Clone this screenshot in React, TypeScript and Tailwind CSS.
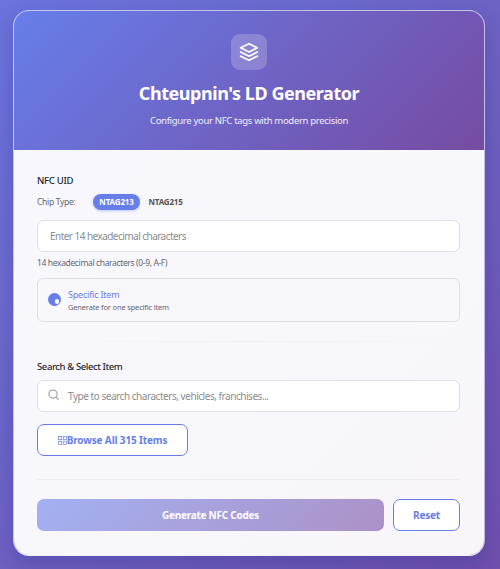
import React from 'react';

function LayersIcon() {
  return (
    <svg width="20" height="20" viewBox="0 0 24 24" fill="none" stroke="white" strokeWidth="2.1" strokeLinecap="round" strokeLinejoin="round">
      <path d="M12 2 2 7l10 5 10-5-10-5Z" />
      <path d="m2 12 10 5 10-5" />
      <path d="m2 17 10 5 10-5" />
    </svg>
  );
}

function SearchIcon() {
  return (
    <svg width="11" height="11" viewBox="0 0 24 24" fill="none" stroke="#96969b" strokeWidth="2.3" strokeLinecap="round">
      <circle cx="11" cy="11" r="9" />
      <path d="m22.5 22.5-5-5" />
    </svg>
  );
}

function GridIcon() {
  return (
    <svg width="9" height="9" viewBox="0 0 9 9" fill="none" stroke="#667eea" strokeWidth="0.7">
      <rect x="0.6" y="0.6" width="3.1" height="3.1" />
      <rect x="5.2" y="0.6" width="3.1" height="3.1" />
      <rect x="0.6" y="5.2" width="3.1" height="3.1" />
      <rect x="5.2" y="5.2" width="3.1" height="3.1" />
    </svg>
  );
}

export default function App() {
  return (
    <div className="h-[569px] w-[500px] overflow-hidden bg-linear-[135deg,#6b74dc_0%,#6c66c8_40%,#7050ac_100%] pt-[10px] pl-[13px] font-['Noto_Sans',sans-serif]">
      <main className="h-[546px] w-[472px] overflow-hidden rounded-[16px] border border-white/60 border-b-white/90 bg-linear-[135deg,#f7f8fe,#f8f6fb] bg-clip-padding shadow-[0_8px_20px_rgba(31,38,135,0.28)]">
        <header className="flex h-[139px] flex-col items-center bg-linear-[135deg,#667eea_0%,#764ba2_100%] pt-[23px] text-white">
          <div className="flex size-9 items-center justify-center rounded-[9px] bg-white/20">
            <LayersIcon />
          </div>
          <h1 className="mt-[10px] text-[18px] leading-[26px] font-bold tracking-[-0.45px] whitespace-nowrap">Chteupnin's LD Generator</h1>
          <p className="mt-[8px] text-[9.5px] leading-[14px] tracking-[-0.31px] whitespace-nowrap text-white/90">Configure your NFC tags with modern precision</p>
        </header>

        <div className="flex flex-col pt-[24px] pr-[24px] pl-[23px]">
          <label className="h-[14px] text-[9.5px] leading-[14px] font-medium tracking-[-0.3px] text-[#25252b]">NFC UID</label>
          <div className="mt-[6px] flex h-[16px] items-center">
            <span className="w-[56px] text-[8.5px] tracking-[-0.3px] text-[#66666c]">Chip Type:</span>
            <span className="flex h-[16px] w-[47px] items-center justify-center rounded-full bg-[#667eea] text-[8px] font-bold tracking-[-0.15px] text-white shadow-[0_1px_3px_rgba(102,126,234,0.4)]">NTAG213</span>
            <span className="flex h-[16px] w-[50px] items-center justify-center rounded-full bg-[#f8f8fa] pl-[1px] text-[8px] font-bold tracking-[-0.2px] text-[#55555a]">NTAG215</span>
          </div>
          <div className="mt-[10px] flex h-[32px] items-center rounded-[7px] border border-[#dfdfe5] bg-white pl-[12px] text-[10px] tracking-[-0.54px] text-[#8c8c90]">Enter 14 hexadecimal characters</div>
          <p className="mt-[5px] h-[12px] text-[8.5px] leading-[12px] tracking-[-0.36px] text-[#66666c]">14 hexadecimal characters (0-9, A-F)</p>
          <div className="mt-[9px] flex h-[44px] items-center rounded-[6px] border border-[#dfdfe6] pl-[10px]">
            <span className="mb-[2px] flex size-[13px] items-end justify-end rounded-full bg-[#667eea] pr-[2px] pb-[2px]">
              <span className="size-[4.5px] rounded-full bg-white" />
            </span>
            <div className="ml-[7px]">
              <div className="text-[9px] leading-[13px] tracking-[-0.2px] text-[#667eea]">Specific Item</div>
              <div className="text-[7.5px] leading-[12px] tracking-[-0.17px] text-[#66666c]">Generate for one specific item</div>
            </div>
          </div>
          <div className="mt-[19px] h-px bg-linear-to-r from-transparent via-[#efeff4] to-transparent" />
          <label className="mt-[18px] h-[14px] text-[9.5px] leading-[14px] font-medium tracking-[-0.4px] text-[#25252b]">Search &amp; Select Item</label>
          <div className="mt-[6px] flex h-[32px] items-center rounded-[7px] border border-[#dfdfe5] bg-white pl-[10px] text-[10px] tracking-[-0.46px] text-[#8c8c90]">
            <span className="mb-[3px]"><SearchIcon /></span>
            <span className="ml-[9px]">Type to search characters, vehicles, franchises...</span>
          </div>
          <button className="mt-[12px] flex h-[32px] w-[151px] items-center justify-center rounded-[7px] border border-[#667eea] bg-white text-[10px] font-bold tracking-[-0.13px] whitespace-nowrap text-[#667eea]">
            <GridIcon />
            <span>Browse All 315 Items</span>
          </button>
          <div className="mt-[23px] h-px bg-[#ededf2]" />
          <div className="mt-[19px] flex gap-[9px]">
            <button className="h-[32px] w-[347px] rounded-[7px] bg-linear-[135deg,#a3b1f2,#ac91c7] text-[10px] font-bold tracking-[-0.25px] text-white">Generate NFC Codes</button>
            <button className="h-[32px] w-[67px] rounded-[7px] border border-[#667eea] bg-white text-[10px] font-bold tracking-[-0.2px] text-[#667eea]">Reset</button>
          </div>
        </div>
      </main>
    </div>
  );
}
